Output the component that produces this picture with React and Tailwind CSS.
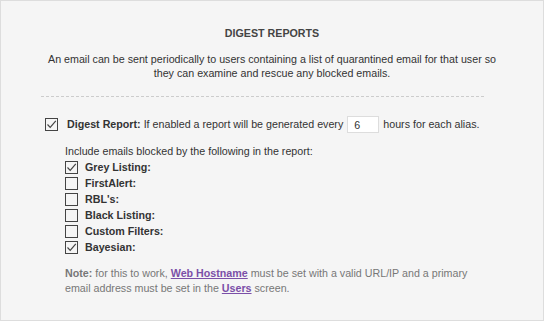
import React from 'react';

const Box = ({ checked }) => (
  <span className="inline-flex w-[13px] h-[13px] shrink-0 border border-[#444] bg-[#f5f5f5] items-center justify-center">
    {checked && (
      <svg width="11" height="11" viewBox="0 0 11 11">
        <path d="M1.5 5.5 L4.2 8.3 L9.8 1.8" fill="none" stroke="#444" strokeWidth="1.2" />
      </svg>
    )}
  </span>
);

const filters = [
  { label: 'Grey Listing:', checked: true },
  { label: 'FirstAlert:', checked: false },
  { label: "RBL's:", checked: false },
  { label: 'Black Listing:', checked: false },
  { label: 'Custom Filters:', checked: false },
  { label: 'Bayesian:', checked: true },
];

export default function App() {
  return (
    <div className="w-[544px] h-[321px] bg-[#f5f5f5] border border-[#dddddd] text-[10.7px] text-[#333] font-['Liberation_Sans',Arial,sans-serif] leading-[15px]">
      <div className="pt-[25px] text-center">
        <h2 className="font-bold text-[10.7px] text-[#444] leading-[15px]">DIGEST REPORTS</h2>
        <p className="mt-[11px] px-[40px] leading-[14px]">
          An email can be sent periodically to users containing a list of quarantined email for that user so
          they can examine and rescue any blocked emails.
        </p>
      </div>
      <div className="ml-[40px] mt-[16px] border-t border-dashed border-[#cccccc] w-[443px]" />

      <div className="pl-[44px] mt-[19px] flex items-center h-[17px]">
        <Box checked />
        <span className="ml-[9px] font-bold">Digest Report:</span>
        <span className="ml-[3px]">If enabled a report will be generated every</span>
        <input
          defaultValue="6"
          className="ml-[4px] w-[32px] h-[17px] bg-white border border-[#dddddd] px-[6px] text-[10.7px] outline-none"
        />
        <span className="ml-[4px]">hours for each alias.</span>
      </div>

      <div className="pl-[64px] mt-[11px]">
        <p>Include emails blocked by the following in the report:</p>
        <div className="flex flex-col">
          {filters.map((f) => (
            <div key={f.label} className="flex items-center h-[16px]">
              <Box checked={f.checked} />
              <span className="ml-[7px] font-bold">{f.label}</span>
            </div>
          ))}
        </div>
        <p className="mt-[11px] text-[#777] w-[420px]">
          <span className="font-bold">Note:</span> for this to work,{' '}
          <a className="font-bold text-[#7b4fa8] underline">Web Hostname</a> must be set with a valid URL/IP and a primary
          email address must be set in the <a className="font-bold text-[#7b4fa8] underline">Users</a> screen.
        </p>
      </div>
    </div>
  );
}
